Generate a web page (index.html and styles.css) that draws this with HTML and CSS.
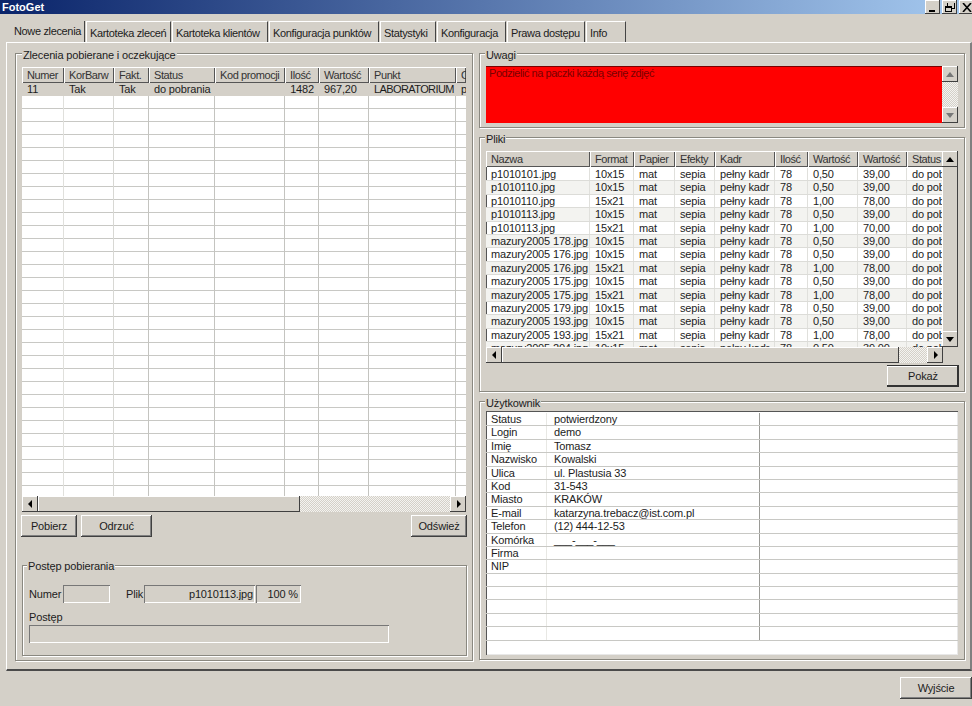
FILE: index.html
```html
<!DOCTYPE html>
<html lang="pl">
<head>
<meta charset="utf-8">
<title>FotoGet</title>
<link rel="stylesheet" href="styles.css">
</head>
<body>
<div class="app">
  <header class="titlebar">
    <span>FotoGet</span>
    <div class="caption">
      <button class="cbtn"><svg width="10" height="9" viewBox="0 0 10 9"><path d="M1 7h6v2H1z" fill="#000"/></svg></button>
      <button class="cbtn"><svg width="10" height="9" viewBox="0 0 10 9"><path d="M3 0h6v5H7v1h3V0H2v3h1zM0 3h7v6H0zM1 5v3h5V5z" fill="#000" fill-rule="evenodd"/></svg></button>
      <button class="cbtn close"><svg width="10" height="9" viewBox="0 0 10 9"><path d="M1 0l8 9M9 0L1 9" stroke="#000" stroke-width="1.6"/></svg></button>
    </div>
  </header>
  <nav class="tabs">
    <div class="tab active w77">Nowe zlecenia</div>
    <div class="tab w86">Kartoteka zleceń</div>
    <div class="tab w97">Kartoteka klientów</div>
    <div class="tab w111">Konfiguracja punktów</div>
    <div class="tab w57">Statystyki</div>
    <div class="tab w70">Konfiguracja</div>
    <div class="tab w79">Prawa dostępu</div>
    <div class="tab w40">Info</div>
  </nav>
  <main class="panel">
    <section class="group left">
      <h2 class="legend">Zlecenia pobierane i oczekujące</h2>
      <div class="grid orders">
        <div class="head">
          <div class="hc o1">Numer</div><div class="hc o2">KorBarw</div><div class="hc o3">Fakt.</div><div class="hc o4">Status</div><div class="hc o5">Kod promocji</div><div class="hc o6">Ilość</div><div class="hc o7">Wartość</div><div class="hc o8">Punkt</div><div class="hc o9">O</div>
        </div>
        <div class="orderbody">
          <div class="row selected">
            <div class="c o1">11</div><div class="c o2">Tak</div><div class="c o3">Tak</div><div class="c o4">do pobrania</div><div class="c o5"></div><div class="c o6 right">1482</div><div class="c o7">967,20</div><div class="c o8 caps">LABORATORIUM</div><div class="c o9">p</div>
          </div>
        </div>
        <div class="hscroll">
          <button class="sb"><svg width="5" height="8" viewBox="0 0 5 8"><path d="M4 0v8L0 4z"/></svg></button>
          <div class="thumb t278"></div><div class="track"></div>
          <button class="sb"><svg width="5" height="8" viewBox="0 0 5 8"><path d="M1 0v8l4-4z"/></svg></button>
        </div>
      </div>
      <div class="actions">
        <button class="btn b56">Pobierz</button>
        <button class="btn b71">Odrzuć</button>
        <button class="btn b56 push">Odśwież</button>
      </div>
      <section class="group progress">
        <h2 class="legend small">Postęp pobierania</h2>
        <div class="fields">
          <label class="flabel l34">Numer</label><div class="field f47"></div>
          <label class="flabel l18 ml16">Plik</label><div class="field f111">p1010113.jpg</div><div class="field f44">100 %</div>
        </div>
        <div class="plabel">Postęp</div>
        <div class="field bar"></div>
      </section>
    </section>
    <div class="rightcol">
      <section class="group uwagi">
        <h2 class="legend">Uwagi</h2>
        <div class="memo">
          <div class="memotext">Podzielić na paczki każdą serię zdjęć</div>
          <div class="vscroll dither">
            <button class="sb"><svg width="8" height="5" viewBox="0 0 8 5"><path d="M4 0l4 5H0z" fill="#777"/></svg></button>
            <div class="track"></div>
            <button class="sb"><svg width="8" height="5" viewBox="0 0 8 5"><path d="M4 5l4-5H0z" fill="#777"/></svg></button>
          </div>
        </div>
      </section>
      <section class="group pliki">
        <h2 class="legend">Pliki</h2>
        <div class="grid files">
          <div class="filesmain">
            <div class="filescols">
              <div class="head">
                <div class="hc p1">Nazwa</div><div class="hc p2">Format</div><div class="hc p3">Papier</div><div class="hc p4">Efekty</div><div class="hc p5">Kadr</div><div class="hc p6">Ilość</div><div class="hc p7">Wartość</div><div class="hc p8">Wartość</div><div class="hc p9">Status</div>
              </div>
              <div class="filesbody">
                <div class="row f"><div class="c p1">p1010101.jpg</div><div class="c p2">10x15</div><div class="c p3">mat</div><div class="c p4">sepia</div><div class="c p5">pełny kadr</div><div class="c p6">78</div><div class="c p7">0,50</div><div class="c p8">39,00</div><div class="c p9">do pobrania</div></div>
                <div class="row f alt"><div class="c p1">p1010110.jpg</div><div class="c p2">10x15</div><div class="c p3">mat</div><div class="c p4">sepia</div><div class="c p5">pełny kadr</div><div class="c p6">78</div><div class="c p7">0,50</div><div class="c p8">39,00</div><div class="c p9">do pobrania</div></div>
                <div class="row f"><div class="c p1">p1010110.jpg</div><div class="c p2">15x21</div><div class="c p3">mat</div><div class="c p4">sepia</div><div class="c p5">pełny kadr</div><div class="c p6">78</div><div class="c p7">1,00</div><div class="c p8">78,00</div><div class="c p9">do pobrania</div></div>
                <div class="row f alt"><div class="c p1">p1010113.jpg</div><div class="c p2">10x15</div><div class="c p3">mat</div><div class="c p4">sepia</div><div class="c p5">pełny kadr</div><div class="c p6">78</div><div class="c p7">0,50</div><div class="c p8">39,00</div><div class="c p9">do pobrania</div></div>
                <div class="row f"><div class="c p1">p1010113.jpg</div><div class="c p2">15x21</div><div class="c p3">mat</div><div class="c p4">sepia</div><div class="c p5">pełny kadr</div><div class="c p6">70</div><div class="c p7">1,00</div><div class="c p8">70,00</div><div class="c p9">do pobrania</div></div>
                <div class="row f alt"><div class="c p1">mazury2005 178.jpg</div><div class="c p2">10x15</div><div class="c p3">mat</div><div class="c p4">sepia</div><div class="c p5">pełny kadr</div><div class="c p6">78</div><div class="c p7">0,50</div><div class="c p8">39,00</div><div class="c p9">do pobrania</div></div>
                <div class="row f"><div class="c p1">mazury2005 176.jpg</div><div class="c p2">10x15</div><div class="c p3">mat</div><div class="c p4">sepia</div><div class="c p5">pełny kadr</div><div class="c p6">78</div><div class="c p7">0,50</div><div class="c p8">39,00</div><div class="c p9">do pobrania</div></div>
                <div class="row f alt"><div class="c p1">mazury2005 176.jpg</div><div class="c p2">15x21</div><div class="c p3">mat</div><div class="c p4">sepia</div><div class="c p5">pełny kadr</div><div class="c p6">78</div><div class="c p7">1,00</div><div class="c p8">78,00</div><div class="c p9">do pobrania</div></div>
                <div class="row f"><div class="c p1">mazury2005 175.jpg</div><div class="c p2">10x15</div><div class="c p3">mat</div><div class="c p4">sepia</div><div class="c p5">pełny kadr</div><div class="c p6">78</div><div class="c p7">0,50</div><div class="c p8">39,00</div><div class="c p9">do pobrania</div></div>
                <div class="row f alt"><div class="c p1">mazury2005 175.jpg</div><div class="c p2">15x21</div><div class="c p3">mat</div><div class="c p4">sepia</div><div class="c p5">pełny kadr</div><div class="c p6">78</div><div class="c p7">1,00</div><div class="c p8">78,00</div><div class="c p9">do pobrania</div></div>
                <div class="row f"><div class="c p1">mazury2005 179.jpg</div><div class="c p2">10x15</div><div class="c p3">mat</div><div class="c p4">sepia</div><div class="c p5">pełny kadr</div><div class="c p6">78</div><div class="c p7">0,50</div><div class="c p8">39,00</div><div class="c p9">do pobrania</div></div>
                <div class="row f alt"><div class="c p1">mazury2005 193.jpg</div><div class="c p2">10x15</div><div class="c p3">mat</div><div class="c p4">sepia</div><div class="c p5">pełny kadr</div><div class="c p6">78</div><div class="c p7">0,50</div><div class="c p8">39,00</div><div class="c p9">do pobrania</div></div>
                <div class="row f"><div class="c p1">mazury2005 193.jpg</div><div class="c p2">15x21</div><div class="c p3">mat</div><div class="c p4">sepia</div><div class="c p5">pełny kadr</div><div class="c p6">78</div><div class="c p7">1,00</div><div class="c p8">78,00</div><div class="c p9">do pobrania</div></div>
                <div class="row f alt"><div class="c p1">mazury2005 204.jpg</div><div class="c p2">10x15</div><div class="c p3">mat</div><div class="c p4">sepia</div><div class="c p5">pełny kadr</div><div class="c p6">78</div><div class="c p7">0,50</div><div class="c p8">39,00</div><div class="c p9">do pobrania</div></div>
              </div>
            </div>
            <div class="vscroll plain">
              <button class="sb"><svg width="8" height="5" viewBox="0 0 8 5"><path d="M4 0l4 5H0z"/></svg></button>
              <div class="vthumb"></div>
              <button class="sb"><svg width="8" height="5" viewBox="0 0 8 5"><path d="M4 5l4-5H0z"/></svg></button>
            </div>
          </div>
          <div class="hscroll">
            <button class="sb"><svg width="5" height="8" viewBox="0 0 5 8"><path d="M4 0v8L0 4z"/></svg></button>
            <div class="thumb t397"></div><div class="track"></div>
            <button class="sb"><svg width="5" height="8" viewBox="0 0 5 8"><path d="M1 0v8l4-4z"/></svg></button>
            <div class="corner"></div>
          </div>
        </div>
        <div class="showrow"><button class="btn b72">Pokaż</button></div>
      </section>
      <section class="group user">
        <h2 class="legend">Użytkownik</h2>
        <div class="grid usergrid">
          <div class="row u"><div class="c u1">Status</div><div class="c u2">potwierdzony</div><div class="c u3"></div></div>
          <div class="row u"><div class="c u1">Login</div><div class="c u2">demo</div><div class="c u3"></div></div>
          <div class="row u"><div class="c u1">Imię</div><div class="c u2">Tomasz</div><div class="c u3"></div></div>
          <div class="row u"><div class="c u1">Nazwisko</div><div class="c u2">Kowalski</div><div class="c u3"></div></div>
          <div class="row u"><div class="c u1">Ulica</div><div class="c u2">ul. Plastusia 33</div><div class="c u3"></div></div>
          <div class="row u"><div class="c u1">Kod</div><div class="c u2">31-543</div><div class="c u3"></div></div>
          <div class="row u"><div class="c u1">Miasto</div><div class="c u2">KRAKÓW</div><div class="c u3"></div></div>
          <div class="row u"><div class="c u1">E-mail</div><div class="c u2">katarzyna.trebacz@ist.com.pl</div><div class="c u3"></div></div>
          <div class="row u"><div class="c u1">Telefon</div><div class="c u2">(12) 444-12-53</div><div class="c u3"></div></div>
          <div class="row u"><div class="c u1">Komórka</div><div class="c u2">___-___-___</div><div class="c u3"></div></div>
          <div class="row u"><div class="c u1">Firma</div><div class="c u2"></div><div class="c u3"></div></div>
          <div class="row u"><div class="c u1">NIP</div><div class="c u2"></div><div class="c u3"></div></div>
          <div class="row u"><div class="c u1"></div><div class="c u2"></div><div class="c u3"></div></div>
          <div class="row u"><div class="c u1"></div><div class="c u2"></div><div class="c u3"></div></div>
          <div class="row u"><div class="c u1"></div><div class="c u2"></div><div class="c u3"></div></div>
          <div class="row u"><div class="c u1"></div><div class="c u2"></div><div class="c u3"></div></div>
          <div class="row u"><div class="c u1 last"></div><div class="c u2 last"></div><div class="c u3"></div></div>
        </div>
      </section>
    </div>
  </main>
  <footer class="footer"><button class="btn exit">Wyjście</button></footer>
</div>
</body>
</html>
```

FILE: styles.css
```css
* { box-sizing: border-box; }
html, body { margin: 0; padding: 0; }
body {
  width: 972px; height: 706px; overflow: hidden;
  background: #d4d0c8; color: #1c1c1c;
  font: 11px/13px "Liberation Sans", Arial, sans-serif;
  letter-spacing: -0.15px;
}
button { font: inherit; color: inherit; padding: 0; letter-spacing: inherit; }
.app { width: 972px; height: 706px; display: flex; flex-direction: column; overflow: hidden; }

.titlebar {
  height: 14px; flex: none; display: flex; align-items: center; justify-content: space-between;
  background: linear-gradient(90deg, #0a246a, #a6caf0);
  color: #fff; font-weight: bold; padding-left: 2px; overflow: hidden; letter-spacing: 0;
}
.caption { display: flex; gap: 2px; margin-right: -2px; }
.cbtn {
  width: 15px; height: 14px; background: #d4d0c8; border: 0;
  box-shadow: inset -1px -1px #404040, inset 1px 1px #fff;
  display: flex; align-items: center; justify-content: center;
}

.tabs { height: 28px; flex: none; padding: 7px 0 0 8px; display: flex; gap: 1px; align-items: flex-end; letter-spacing: -0.35px; }
.tab {
  height: 21px; padding: 5px 0 0 3px; white-space: nowrap; flex: none;
  border-right: 1px solid #444; border-left: 1px solid #fff; border-top: 1px solid #fff;
}
.tab.active { padding-left: 6px; border-left: 0; border-top: 0; padding-top: 4px; }
.w77 { width: 77px; } .w86 { width: 85px; } .w97 { width: 96px; } .w111 { width: 110px; }
.w57 { width: 56px; } .w70 { width: 69px; } .w79 { width: 78px; } .w40 { width: 40px; }

.panel {
  height: 629px; flex: none; margin: 0 0 0 6px; width: 966px;
  border-top: 1px solid #fff; border-left: 1px solid #fff;
  border-bottom: 2px solid #4a4a4a; border-right: 2px solid #808080;
  padding: 10px 5px 9px 8px;
  display: grid; grid-template-columns: 458px 486px; column-gap: 6px;
}
.group {
  position: relative; border: 1px solid #8a8880;
  box-shadow: inset 1px 1px #fff, 1px 1px #fff;
}
.legend {
  position: absolute; left: 6px; top: -5px; margin: 0; padding: 0 1px;
  background: #d4d0c8; font: inherit; letter-spacing: inherit; height: 12px; line-height: 12px;
}
.rightcol .legend { left: 5px; }
.legend.small { left: 4px; top: -6px; }
.left { padding: 13px 6px 4px 6px; display: flex; flex-direction: column; }
.rightcol { display: flex; flex-direction: column; }
.uwagi { height: 75px; padding: 12px 6px 0; }
.pliki { height: 255px; margin-top: 9px; padding: 13px 6px 0; }
.user { height: 259px; margin-top: 9px; padding: 9px 6px 0; }

.grid { background: #fff; box-shadow: inset 1px 1px #555, inset -1px -1px #e8e8e8; overflow: hidden; }
.orders { width: 444px; height: 445px; display: flex; flex-direction: column; flex: none; }
.head { display: flex; height: 16px; flex: none; background: #d4d0c8; white-space: nowrap; overflow: hidden; letter-spacing: -0.4px; }
.hc {
  flex: none; padding: 2px 0 0 5px; height: 16px; overflow: hidden; color: #333;
  box-shadow: inset 1px 1px #fff, inset -1px -1px #555;
}
.orderbody {
  flex: 1; overflow: hidden;
  background: repeating-linear-gradient(#fff 0 12px, #c8c8c4 12px 13px);
  position: relative;
}
.orderbody::before {
  content: ""; position: absolute; inset: 0; pointer-events: none;
  background:
    linear-gradient(#d8d8d4, #d8d8d4) 91px 0/1px 100% no-repeat,
    linear-gradient(#c4c4c0, #c4c4c0) 126px 0/1px 100% no-repeat,
    linear-gradient(#c4c4c0, #c4c4c0) 192px 0/1px 100% no-repeat,
    linear-gradient(#c4c4c0, #c4c4c0) 262px 0/1px 100% no-repeat,
    linear-gradient(#c4c4c0, #c4c4c0) 296px 0/1px 100% no-repeat,
    linear-gradient(#c4c4c0, #c4c4c0) 346px 0/1px 100% no-repeat,
    linear-gradient(#c4c4c0, #c4c4c0) 433px 0/1px 100% no-repeat,
    linear-gradient(#e0e0dc, #e0e0dc) 41px 0/1px 100% no-repeat;
}
.row { display: flex; white-space: nowrap; position: relative; z-index: 1; }
.row.selected { height: 13px; background: #d4d0c8; }
.c { flex: none; padding-left: 5px; overflow: hidden; height: 100%; }
.right { text-align: right; padding-right: 5px; }
.caps { letter-spacing: -0.6px; }
.o1 { width: 42px; } .o2 { width: 50px; } .o3 { width: 35px; } .o4 { width: 66px; } .o5 { width: 70px; }
.o6 { width: 34px; } .o7 { width: 50px; } .o8 { width: 87px; } .o9 { width: 10px; }

.hscroll { height: 16px; flex: none; display: flex; }
.sb {
  width: 16px; height: 16px; flex: none; background: #d4d0c8; border: 0;
  box-shadow: inset -1px -1px #404040, inset 1px 1px #fff;
  display: flex; align-items: center; justify-content: center;
}
.thumb { height: 16px; flex: none; background: #d4d0c8; box-shadow: inset -1px -1px #404040, inset 1px 1px #fff; }
.t278 { width: 262px; } .t397 { width: 397px; }
.track { flex: 1; background: repeating-conic-gradient(#d4d0c8 0 25%, #f4f3f0 0 50%) 0 0/2px 2px; }
.corner { width: 15px; flex: none; background: #d4d0c8; }

.actions { display: flex; gap: 4px; margin: 3px -1px 0 -1px; flex: none; }
.btn {
  height: 22px; background: #d4d0c8; border: 0; flex: none; text-align: center;
  box-shadow: inset -1px -1px #404040, inset 1px 1px #fff, inset -2px -2px #808080;
}
.b56 { width: 56px; } .b71 { width: 71px; }
.b72 {
  width: 72px;
  box-shadow: inset 0 1px #333, inset -2px -2px #333, inset 1px 2px #fff;
}
.push { margin-left: auto; }

.progress { width: 445px; height: 91px; margin: 28px 0 0 0; flex: none; padding: 19px 6px 0; }
.fields { display: flex; align-items: center; height: 18px; }
.flabel { flex: none; }
.l34 { width: 34px; } .l18 { width: 18px; } .ml16 { margin-left: 16px; }
.field { height: 18px; flex: none; box-shadow: inset 1px 1px #777, inset -1px -1px #fff; }
.f47 { width: 47px; } .f111 { width: 111px; text-align: right; padding: 3px 2px 0 0; }
.f44 { width: 45px; margin-left: 1px; text-align: right; padding: 3px 3px 0 0; }
.plabel { margin-top: 8px; }
.bar { width: 360px; margin-top: 1px; }

.memo { width: 472px; height: 57px; display: flex; box-shadow: inset 0 1px #7a0000; background: #ff0000; }
.memotext { flex: 1; color: #7a0000; padding: 1px 0 0 3px; letter-spacing: -0.45px; }
.vscroll { width: 16px; flex: none; display: flex; flex-direction: column; }
.dither .sb { height: 16px; }
.vthumb { flex: 1; background: #d4d0c8; box-shadow: inset -1px 0 #404040, inset 1px 0 #fff; }
.files { width: 472px; height: 212px; display: flex; flex-direction: column; }
.filesmain { display: flex; height: 196px; flex: none; }
.filescols { flex: 1; min-width: 0; overflow: hidden; }
.filesbody { height: 180px; overflow: hidden; padding-top: 1px; }
.f { height: 13.4px; border-bottom: 1px solid #dcdcd8; }
.f.alt { background: #f3f3f0; }
.f .c { border-right: 1px solid #e0e0dc; }
.p1 { width: 104px; } .p2 { width: 44px; } .p3 { width: 41px; } .p4 { width: 40px; } .p5 { width: 60px; }
.p6 { width: 33px; } .p7 { width: 50px; } .p8 { width: 49px; } .p9 { width: 36px; }
.showrow { display: flex; justify-content: flex-end; margin: 2px -1px 0 0; }

.usergrid { width: 472px; height: 244px; padding-top: 2px; }
.u { height: 13.4px; border-bottom: 1px solid #c8c8c4; }
.u1 { width: 61px; border-right: 1px solid #e8e8e4; }
.u2 { width: 213px; padding-left: 7px; border-right: 1px solid #9a9a96; }
.u3 { flex: 1; }

.footer { flex: 1; display: flex; justify-content: flex-end; align-items: flex-start; padding-top: 6px; }
.exit { width: 72px; height: 22px; }
```
